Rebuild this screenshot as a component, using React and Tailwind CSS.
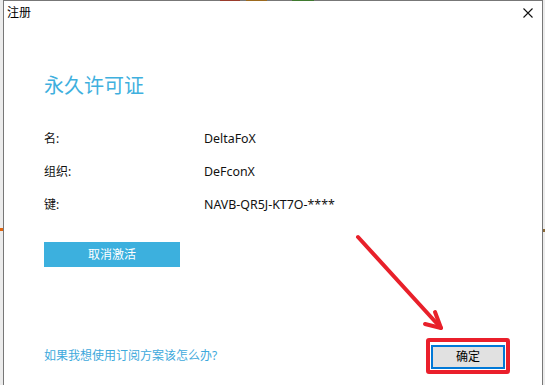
import React from "react";

const font = "font-['Noto_Sans','Noto_Sans_CJK_SC',sans-serif]";

const rows = [
  { label: "名:", value: "DeltaFoX" },
  { label: "组织:", value: "DeFconX" },
  { label: "键:", value: "NAVB-QR5J-KT7O-****" },
];

export default function App() {
  return (
    <div className={`relative w-[545px] h-[385px] overflow-hidden bg-[#ececec] flex ${font}`}>
      {/* glimpses of the desktop behind the window edge */}
      <div className="absolute left-[220px] top-0 w-[20px] h-[1px] bg-[#9a3b2c]" />
      <div className="absolute left-[246px] top-0 w-[21px] h-[1px] bg-[#9c6a1e]" />
      <div className="absolute left-[292px] top-0 w-[22px] h-[1px] bg-[#3f7a2f]" />
      <div className="absolute left-0 top-[228px] w-[3px] h-[3px] bg-[#e0650f]" />
      <div className="absolute left-[543px] top-[229px] w-[2px] h-[3px] bg-[#8a6a3a]" />

      <div className="ml-[3px] w-[540px] h-[400px] border border-b-0 border-[#777] bg-white flex flex-col">
        <div className="flex items-start justify-between pt-[4px] h-[20px]">
          <span className="pl-[3px] text-[12px] leading-[16px] text-black">注册</span>
          <svg width="10" height="10" viewBox="0 0 10 10" className="mt-[3px] mr-[9px]">
            <path d="M0.5 0.5 L9.5 9.5 M9.5 0.5 L0.5 9.5" stroke="#111" strokeWidth="1.1" />
          </svg>
        </div>

        <div className="pl-[40px] pr-[32px] flex flex-col">
          <h1 className="mt-[51px] text-[20px] leading-[28px] text-[#3fb0de] font-normal">永久许可证</h1>

          <div className="mt-[22px] grid grid-cols-[160px_1fr] text-[12px] leading-[33px] text-[#111]">
            {rows.map((r) => (
              <React.Fragment key={r.label}>
                <span>{r.label}</span>
                <span className="text-[12.4px]">{r.value}</span>
              </React.Fragment>
            ))}
          </div>

          <button className="mt-[21px] w-[136px] h-[25px] bg-[#3cb0de] text-white text-[12px] leading-[25px]">
            取消激活
          </button>

          <div className="mt-[71px] flex items-center justify-between">
            <span className="text-[12px] leading-[16px] text-[#3ea9dc]">如果我想使用订阅方案该怎么办?</span>
            <div className="border-4 border-[#ea1f2b] rounded-[3px] p-[1px] bg-white">
              <button className="w-[74px] h-[24px] border-2 border-[#0078d7] bg-[#e1e1e1] text-[12px] leading-[20px] text-black">
                确定
              </button>
            </div>
          </div>
        </div>
      </div>

      <svg className="absolute left-0 top-0 pointer-events-none" width="545" height="385">
        <g stroke="#e8202a" strokeWidth="4" strokeLinecap="round" strokeLinejoin="round" fill="none">
          <path d="M358 237 L441 328" />
          <path d="M435 312 L441 328 L425 324" />
        </g>
      </svg>
    </div>
  );
}
